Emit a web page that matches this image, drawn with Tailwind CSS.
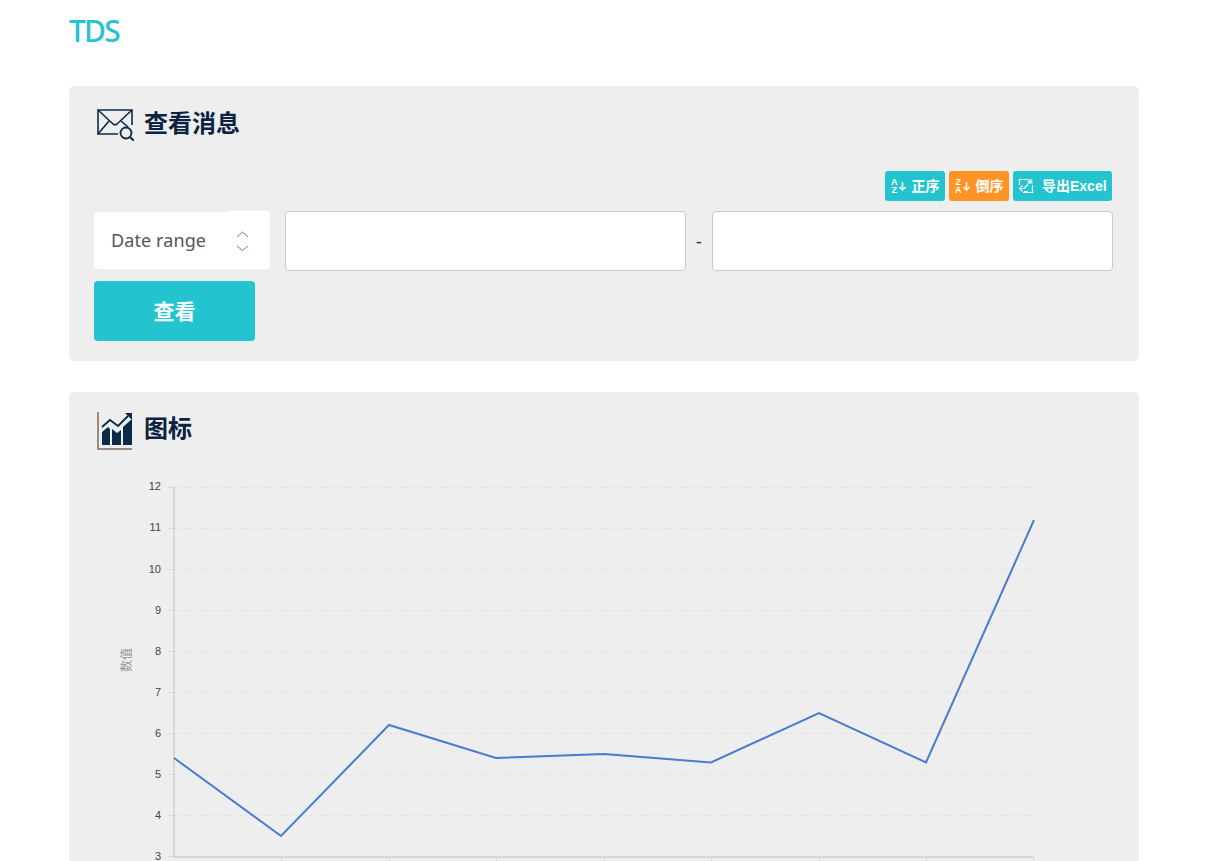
<!DOCTYPE html>
<html lang="zh">
<head>
<meta charset="utf-8">
<title>TDS</title>
<script src="https://cdn.jsdelivr.net/npm/@tailwindcss/browser@4"></script>
</head>
<body class="bg-white h-[861px] w-[1218px] overflow-hidden font-['Noto_Sans','Noto_Sans_CJK_SC',sans-serif]">
<div class="w-[1070px] ml-[69px]">
  <header class="h-[86px] pt-[11px]">
    <div class="text-[30px] leading-[40px] font-medium text-[#26c3cf] tracking-[-1.8px] font-['Noto_Sans',sans-serif]">TDS</div>
  </header>

  <section class="bg-[#eeeeee] rounded-[5px] h-[275px] pl-[25px] pr-[26px] flex flex-col">
    <div class="flex items-center pt-[21px] h-[54px] pl-[3px] gap-[10px]">
      <svg class="w-[37px] h-[33px] block mt-[2px]" viewBox="0 0 37 33" fill="none" stroke="#0b2a4a" stroke-width="1.6">
        <path d="M21 26H1V2h34v15"/>
        <path d="M1 2l15 14q2 1.500 4 0L35 2"/>
        <path d="M1 26l11-13"/>
        <path d="M24 13l7 6"/>
        <circle cx="29" cy="25" r="5.500" stroke-width="1.800"/>
        <path d="M33 29l4 4" stroke-width="2"/>
      </svg>
      <h2 class="text-[24px] leading-[32px] font-bold text-[#0b2340] -mt-[2px]">查看消息</h2>
    </div>
    <div class="flex justify-end gap-[4px] mt-[31px] pr-[1px]">
      <button class="h-[30px] w-[60px] rounded-[3px] bg-[#23c4cf] text-white text-[14px] font-bold flex items-center pl-[6px] gap-[6px]">
        <span class="flex items-center gap-[1px]">
          <span class="flex flex-col text-[9px] leading-[8px] font-bold font-['Liberation_Sans',sans-serif]"><span>A</span><span>Z</span></span>
          <svg class="w-[7px] h-[9px]" viewBox="0 0 7 9" fill="none" stroke="white" stroke-width="1.500"><path d="M3.500 0v8M0.500 5l3 3 3-3"/></svg>
        </span>
        <span class="-mt-[2px]">正序</span>
      </button>
      <button class="h-[30px] w-[60px] rounded-[3px] bg-[#ff9326] text-white text-[14px] font-bold flex items-center pl-[6px] gap-[6px]">
        <span class="flex items-center gap-[1px]">
          <span class="flex flex-col text-[9px] leading-[8px] font-bold font-['Liberation_Sans',sans-serif]"><span>Z</span><span>A</span></span>
          <svg class="w-[7px] h-[9px]" viewBox="0 0 7 9" fill="none" stroke="white" stroke-width="1.500"><path d="M3.500 0v8M0.500 5l3 3 3-3"/></svg>
        </span>
        <span class="-mt-[2px]">倒序</span>
      </button>
      <button class="h-[30px] w-[99px] rounded-[3px] bg-[#23c4cf] text-white text-[14px] font-bold flex items-center pl-[5px] gap-[8px]">
        <svg class="w-[16px] h-[16px]" viewBox="0 0 16 16" fill="none" stroke="white" stroke-width="1.200">
          <path d="M1.500 7V1.500h8M14.500 7v7.500H5"/>
          <path d="M9.500 1l5 5M14.500 1l-5 5M9.500 3.500h5M12 1v5" stroke-width="1"/>
          <path d="M10 6.500L6 10.500H1.500M4.500 7.500l-3 3 3 3M6 13.500h4"/>
        </svg>
        <span class="whitespace-nowrap font-['Liberation_Sans','Noto_Sans_CJK_SC',sans-serif]">导出Excel</span>
      </button>
    </div>
    <div class="flex mt-[10px] h-[60px]">
      <div class="w-[176px] h-[58px] flex text-[18px] text-[#555]">
        <div class="w-[134px] h-[57px] mt-[1px] bg-white rounded-l-[4px] flex items-center pl-[17px] tracking-[0.1px]">Date range</div>
        <div class="w-[42px] h-[58px] bg-white rounded-r-[4px] flex items-center pl-[8px]">
          <svg class="w-[13px] h-[20px] mt-[2px]" viewBox="0 0 13 20" fill="none" stroke-width="1"><path d="M1 6l5.500-5L12 6" stroke="#777"/><path d="M1 15l5.500 4.500L12 15" stroke="#8a7a68"/></svg>
        </div>
      </div>
      <div class="w-[401px] h-[60px] ml-[15px] bg-white border border-[#c9c9c9] rounded-[4px]"></div>
      <div class="w-[26px] text-center text-[18px] leading-[60px] text-[#333]">-</div>
      <div class="w-[401px] h-[60px] bg-white border border-[#c9c9c9] rounded-[4px]"></div>
    </div>
    <button class="mt-[10px] w-[161px] h-[60px] bg-[#23c4cf] rounded-[4px] text-white text-[21px] font-bold pt-[2px]">查看</button>
  </section>

  <section class="bg-[#eeeeee] rounded-[5px] mt-[31px] h-[600px] pl-[25px]">
    <div class="flex items-center pt-[20px] h-[54px] pl-[3px] gap-[10px]">
      <svg class="w-[37px] h-[38px] block mt-[4px]" viewBox="0 0 37 38" fill="none">
        <path d="M1 0v37h34" stroke="#7d6a60" stroke-width="1.500"/>
        <path d="M5 33V20l6-5 2 2v16z" fill="#0b2a4a"/>
        <path d="M15 33V17l5 4 4-3v15z" fill="#0b2a4a"/>
        <path d="M26 33V15l9-8v26z" fill="#0b2a4a"/>
        <path d="M5 15l8-7 8 6 10-10" stroke="#0b2a4a" stroke-width="1.800"/>
        <path d="M28 1h7v7z" fill="#0b2a4a"/>
      </svg>
      <h2 class="text-[24px] leading-[32px] font-bold text-[#0b2340] -mt-[2px]">图标</h2>
    </div>
    <svg class="block mt-[10px] overflow-visible" width="1000" height="420" viewBox="94 456 1000 420" font-family="Liberation Sans, sans-serif" font-size="11" fill="#444">
      <g stroke="#dcdcdc" stroke-width="1" stroke-dasharray="2 3">
        <path d="M175 487.500H1034M175 528.500H1034M175 569.500H1034M175 610.500H1034M175 651.500H1034M175 692.500H1034M175 733.500H1034M175 774.500H1034M175 815.500H1034"/>
      </g>
      <g stroke="#d8d8d8" stroke-width="1" fill="none">
        <path d="M174 486.500V857H1034" stroke-width="2"/>
        <path d="M168 487.500h6M168 528.500h6M168 569.500h6M168 610.500h6M168 651.500h6M168 692.500h6M168 733.500h6M168 774.500h6M168 815.500h6M168 856.500h6"/>
        <path d="M281.500 857v6M389.500 857v6M496.500 857v6M604.500 857v6M711.500 857v6M819.500 857v6M926.500 857v6M1034 857v6"/>
      </g>
      <g text-anchor="end">
        <text x="161" y="490">12</text><text x="161" y="531">11</text><text x="161" y="573">10</text>
        <text x="161" y="614">9</text><text x="161" y="655">8</text><text x="161" y="696">7</text>
        <text x="161" y="737">6</text><text x="161" y="778">5</text><text x="161" y="819">4</text><text x="161" y="860">3</text>
      </g>
      <text transform="translate(131 660) rotate(-90)" text-anchor="middle" fill="#999" font-family="Noto Sans CJK SC, sans-serif" font-size="12">数值</text>
      <polyline fill="none" stroke="#4a7bd0" stroke-width="2" points="174,758 281,836 389,725 496,758 604,754 711,762.500 819,713 926,762.500 1034,520"/>
    </svg>
  </section>
</div>
</body>
</html>
